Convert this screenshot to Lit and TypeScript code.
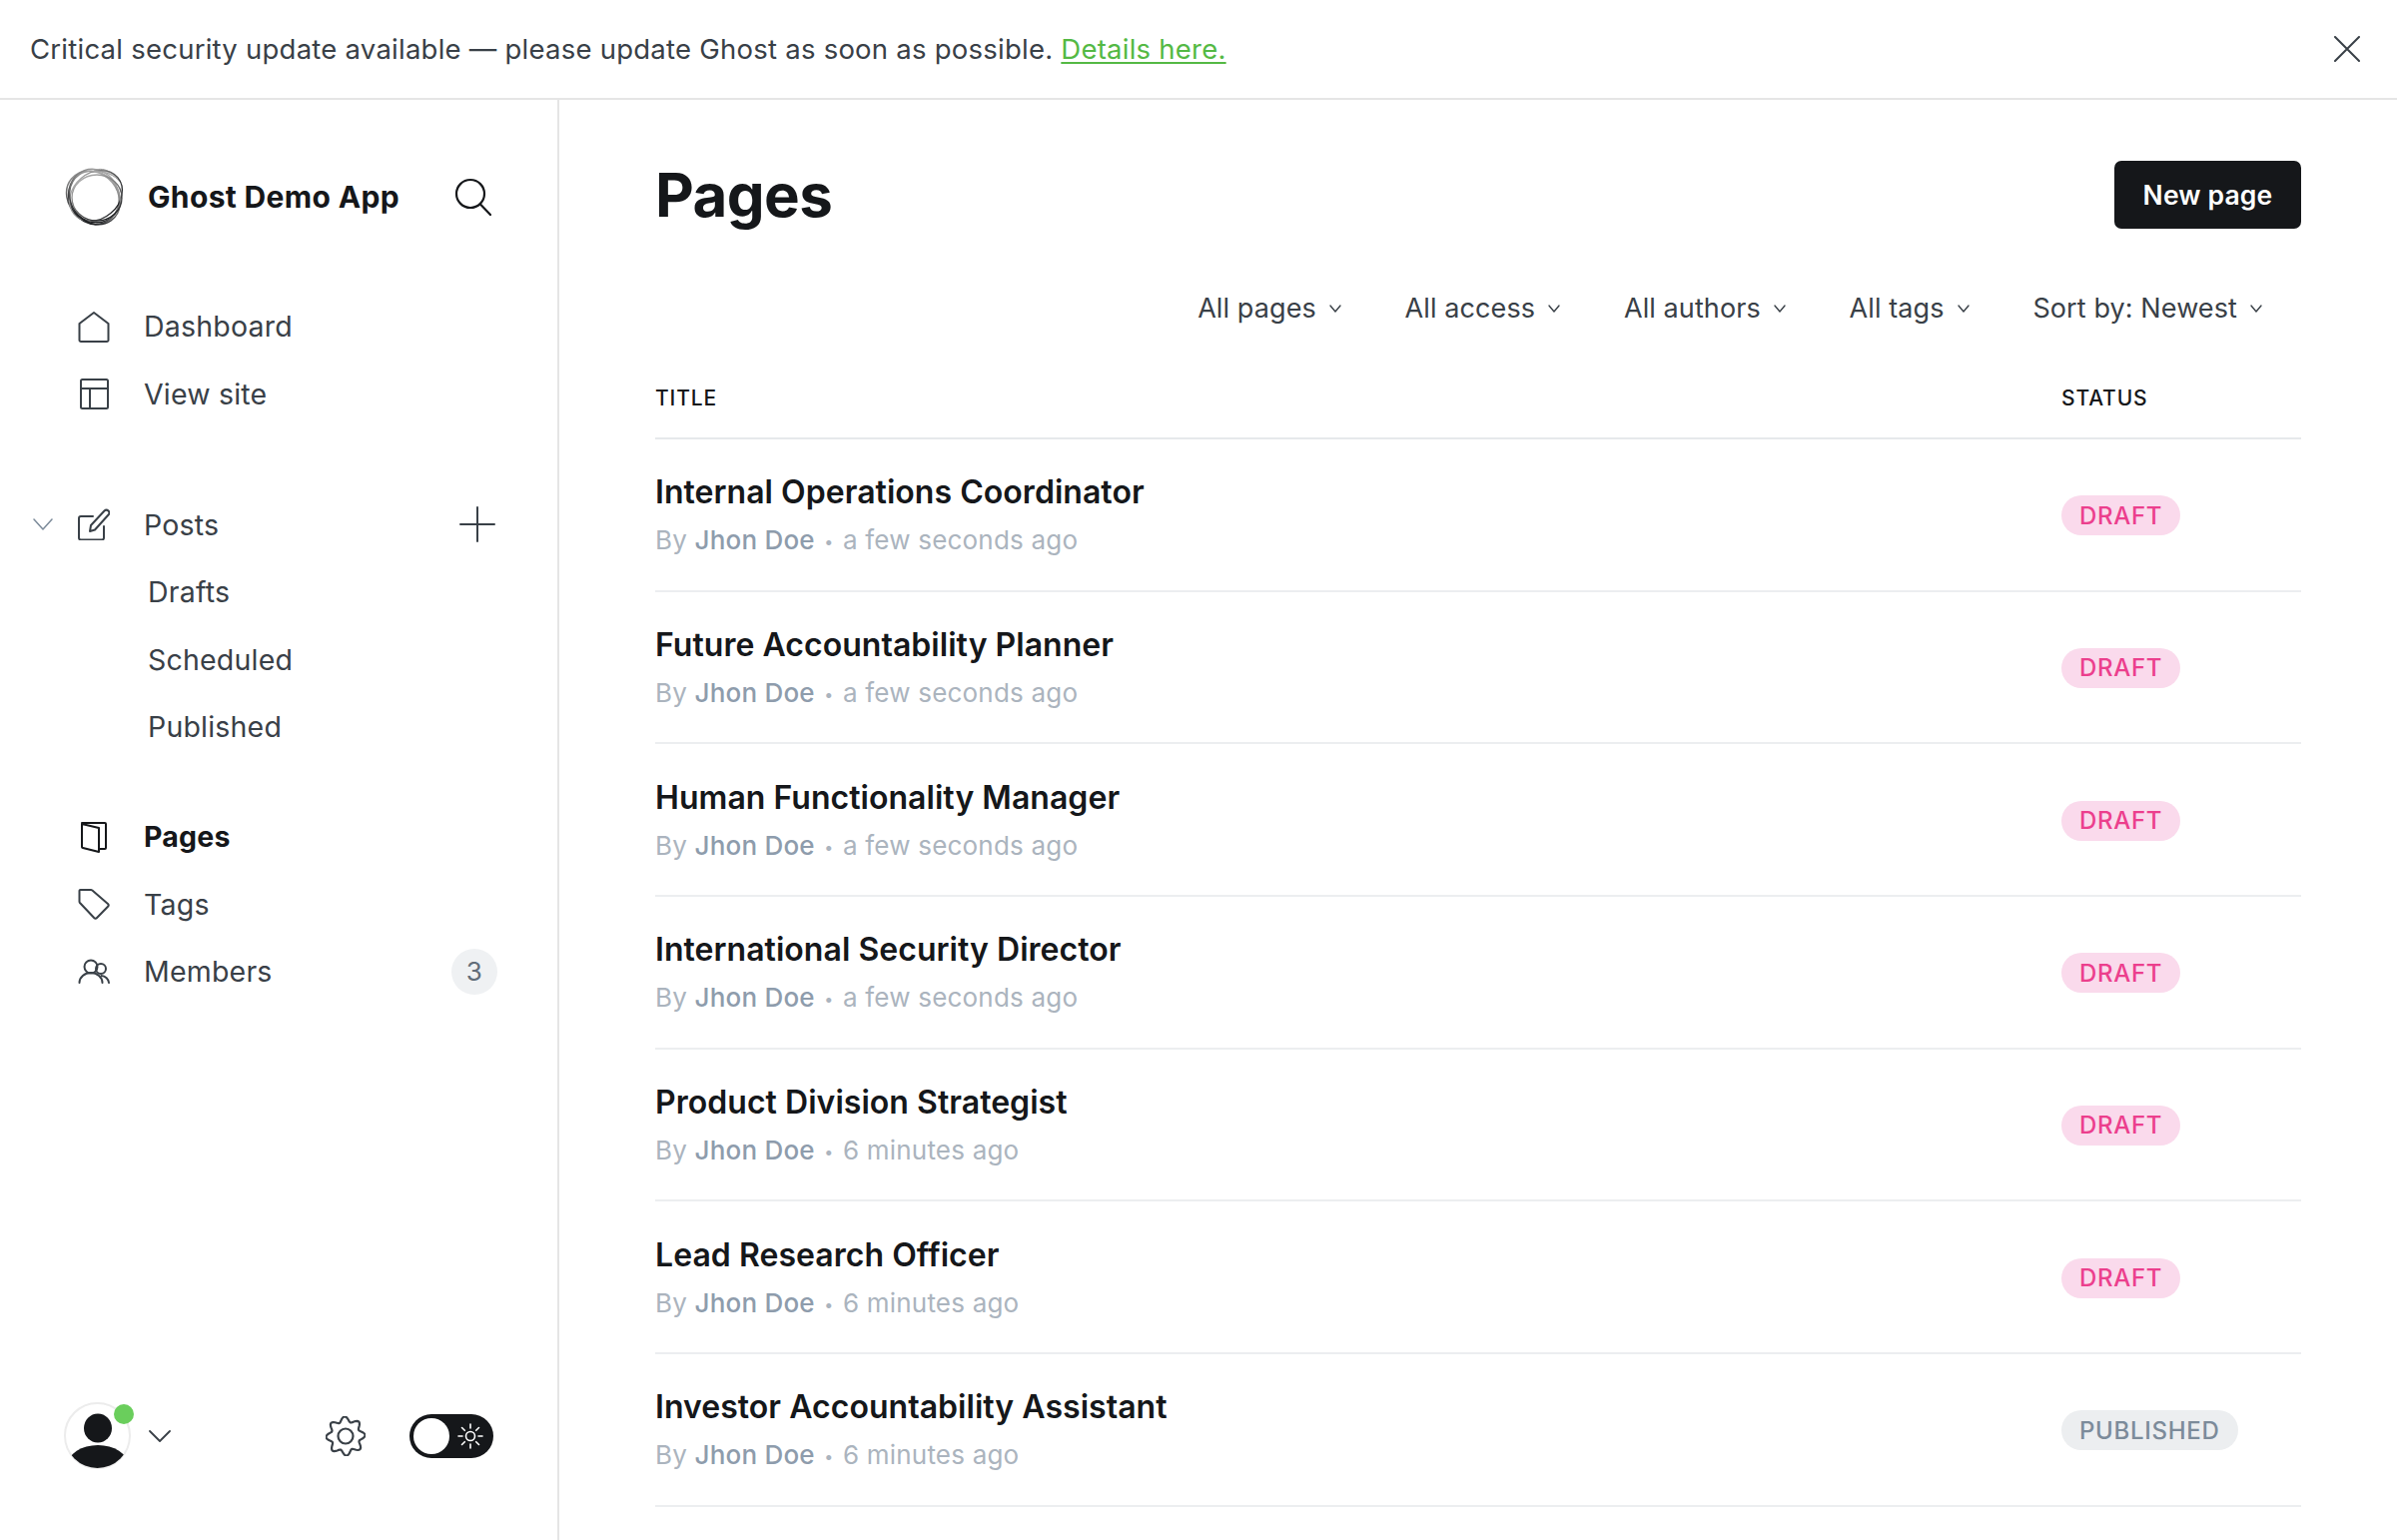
import { LitElement, css, html, svg } from "lit";
import { customElement } from "lit/decorators.js";

const PAGES = [
  { title: "Internal Operations Coordinator", ago: "a few seconds ago", status: "DRAFT" },
  { title: "Future Accountability Planner", ago: "a few seconds ago", status: "DRAFT" },
  { title: "Human Functionality Manager", ago: "a few seconds ago", status: "DRAFT" },
  { title: "International Security Director", ago: "a few seconds ago", status: "DRAFT" },
  { title: "Product Division Strategist", ago: "6 minutes ago", status: "DRAFT" },
  { title: "Lead Research Officer", ago: "6 minutes ago", status: "DRAFT" },
  { title: "Investor Accountability Assistant", ago: "6 minutes ago", status: "PUBLISHED" },
];

const FILTERS = ["All pages", "All access", "All authors", "All tags", "Sort by: Newest"];

// wavy outline for the settings cog
function gearPath() {
  const pts: string[] = [];
  for (let i = 0; i < 96; i++) {
    const a = (i / 96) * Math.PI * 2;
    const r = 17 + 2.6 * Math.cos(8 * a + Math.PI / 8);
    pts.push(`${(20 + r * Math.cos(a)).toFixed(2)} ${(20 + r * Math.sin(a)).toFixed(2)}`);
  }
  return "M" + pts.join("L") + "Z";
}

const ICONS = {
  home: svg`<path d="M16 2 L30.5 13 V29.5 a1.5 1.5 0 0 1 -1.5 1.5 H3 a1.5 1.5 0 0 1 -1.5 -1.5 V13 Z"/>`,
  site: svg`<rect x="3" y="2" width="27" height="29" rx="1.5"/><path d="M3 11 H30 M12 11 V31"/>`,
  edit: svg`<path d="M15 8 H3 a2 2 0 0 0 -2 2 V29.5 a2 2 0 0 0 2 2 H24 a2 2 0 0 0 2 -2 V18"/><path d="M12 23 l1 -6 L26.5 2.5 a2.8 2.8 0 0 1 4 4 L17 21.5 Z"/>`,
  pages: svg`<path d="M4 3 L21 7 V31 L5 27 a1.2 1.2 0 0 1 -1 -1 Z"/><path d="M4 2 H27 a1 1 0 0 1 1 1 V27 a1 1 0 0 1 -1 1 H21"/>`,
  tag: svg`<path d="M2.5 2 H13 a2 2 0 0 1 1.4 .6 L30 16 a2 2 0 0 1 0 2.8 L19 30 a2 2 0 0 1 -2.8 0 L2 15 A2 2 0 0 1 1.5 13.6 V3 a1 1 0 0 1 1 -1 Z"/>`,
  members: svg`<circle cx="13" cy="11" r="6.5"/><path d="M1.5 27 a11.5 10 0 0 1 23 0"/><circle cx="23" cy="13" r="5"/><path d="M23.5 20 a8 7.5 0 0 1 7.5 7"/>`,
};

@customElement("app-root")
export class AppRoot extends LitElement {
  static styles = css`
    :host {
      display: block;
      height: 1542px;
      overflow: hidden;
      background: #fff;
      color: #15171a;
      font-family: Inter, "Liberation Sans", sans-serif;
    }
    svg {
      display: block;
      flex: none;
      fill: none;
      stroke: currentColor;
      stroke-linecap: round;
      stroke-linejoin: round;
    }
    .banner {
      height: 100px;
      box-sizing: border-box;
      border-bottom: 2px solid #e5e5e5;
      display: flex;
      align-items: center;
      justify-content: space-between;
      padding: 0 37px 0 30px;
      font-size: 27.5px;
      letter-spacing: 0.24px;
      color: #394047;
    }
    .banner a {
      color: #54b944;
      text-decoration: underline;
      text-underline-offset: 3px;
    }
    .layout {
      display: flex;
      height: 1442px;
    }
    .sidebar {
      width: 560px;
      box-sizing: border-box;
      border-right: 2px solid #e5e5e5;
      display: flex;
      flex-direction: column;
      padding-top: 67px;
    }
    .brand {
      display: flex;
      align-items: center;
      height: 60px;
      padding: 0 66px 0 65px;
    }
    .brand-name {
      margin-left: 23px;
      font-size: 30px;
      font-weight: 700;
      letter-spacing: 0.35px;
      flex: 1;
    }
    .search {
      color: #15171a;
    }
    .nav {
      margin-top: 66px;
    }
    .group + .group {
      margin-top: 63.5px;
    }
    .group.pages-group {
      margin-top: 42.5px;
    }
    .item {
      display: grid;
      grid-template-columns: 45px 32px 1fr auto;
      align-items: center;
      height: 67.5px;
      padding: 0 60px 0 33px;
      font-size: 28.5px;
      letter-spacing: 0.2px;
      color: #394047;
    }
    .item .label {
      padding-left: 34px;
    }
    .item.active {
      color: #15171a;
      font-weight: 700;
    }
    .plus {
      margin-right: 2px;
    }
    .sub {
      height: 67.5px;
      display: flex;
      align-items: center;
      padding-left: 148px;
      font-size: 28.5px;
      letter-spacing: 0.2px;
      color: #394047;
    }
    .muted {
      color: #7c8b9a;
    }
    .count {
      width: 46px;
      height: 46px;
      border-radius: 50%;
      background: #eff1f3;
      color: #626d79;
      font-size: 26px;
      display: flex;
      align-items: center;
      justify-content: center;
    }
    .footer {
      margin-top: auto;
      display: flex;
      align-items: center;
      padding: 0 64px 71px 64px;
      color: #394047;
    }
    .avatar {
      position: relative;
      width: 67px;
      height: 67px;
    }
    .dot {
      position: absolute;
      left: 50px;
      top: 2px;
      width: 20px;
      height: 20px;
      border-radius: 50%;
      background: #6ace5c;
    }
    .caret {
      margin-left: 18px;
    }
    .gear {
      margin-left: auto;
    }
    .toggle {
      margin-left: 44px;
      width: 84px;
      height: 44px;
      box-sizing: border-box;
      border-radius: 22px;
      background: #15171a;
      display: flex;
      align-items: center;
      padding-left: 4px;
      color: #fff;
    }
    .knob {
      width: 36px;
      height: 36px;
      border-radius: 50%;
      background: #fff;
      margin-right: 8px;
    }
    .main {
      flex: 1;
      padding: 61px 96px 0;
      min-width: 0;
    }
    .head {
      display: flex;
      align-items: center;
      justify-content: space-between;
      height: 68px;
    }
    h1 {
      margin: 0;
      font-size: 60px;
      font-weight: 700;
      letter-spacing: -0.6px;
      line-height: 66px;
    }
    .new {
      width: 187px;
      height: 68px;
      border-radius: 7px;
      background: #15171a;
      color: #fff;
      display: flex;
      align-items: center;
      justify-content: center;
      font-size: 26.5px;
      font-weight: 600;
      letter-spacing: 0.15px;
    }
    .filters {
      display: flex;
      justify-content: flex-end;
      gap: 63.75px;
      height: 40px;
      align-items: center;
      margin-top: 59.5px;
      padding-right: 39px;
      font-size: 27px;
      letter-spacing: 0.1px;
      color: #394047;
    }
    .filter {
      display: flex;
      align-items: center;
      gap: 13px;
    }
    .thead {
      display: grid;
      grid-template-columns: 1fr 240px;
      margin-top: 50.5px;
      padding-bottom: 19px;
      border-bottom: 2px solid #e6e9eb;
      line-height: 40px;
      font-size: 21px;
      font-weight: 500;
      letter-spacing: 0.85px;
    }
    .row {
      display: grid;
      grid-template-columns: 1fr 240px;
      align-items: center;
      height: 152.67px;
      box-sizing: border-box;
      border-bottom: 2px solid #eceef0;
    }
    .text {
      padding-top: 5px;
    }
    .status {
      padding-top: 2px;
    }
    .title {
      font-size: 32px;
      font-weight: 600;
      line-height: 40px;
      letter-spacing: 0.04px;
    }
    .meta {
      margin-top: 8px;
      font-size: 26px;
      line-height: 40px;
      letter-spacing: 0.2px;
      color: #abb4be;
    }
    .author {
      color: #8e9cac;
      font-weight: 500;
    }
    .sep {
      margin: 0 9.5px;
      font-size: 16px;
      vertical-align: 2px;
    }
    .badge {
      display: inline-flex;
      align-items: center;
      height: 40px;
      padding: 0 18px;
      border-radius: 20px;
      font-size: 24px;
      font-weight: 500;
      letter-spacing: 0.7px;
    }
    .badge.draft {
      background: #fadaec;
      color: #ec3f8d;
    }
    .badge.published {
      background: #eceef0;
      color: #7c8b9a;
    }
  `;

  private icon(name: keyof typeof ICONS, size = 32) {
    return html`<svg width=${size} height=${size} viewBox="0 0 32 32" stroke-width="2">${ICONS[name]}</svg>`;
  }

  private logo() {
    return html`<svg width="60" height="60" viewBox="0 0 60 60" stroke-width="1.3">
      <defs>
        <linearGradient id="ring" x1="0.15" y1="0" x2="0.75" y2="1">
          <stop offset="0" stop-color="#b5b5b5" />
          <stop offset="0.55" stop-color="#6a6a6a" />
          <stop offset="1" stop-color="#15171a" />
        </linearGradient>
      </defs>
      <path d="M28 5 C34 -1 48 3 56 16 C50 8 40 4 28 5 Z" fill="#c4c4c4" stroke="#999" stroke-width="1" />
      <ellipse cx="28" cy="30" rx="28" ry="24" transform="rotate(40 28 30)" stroke="url(#ring)" stroke-width="1.5" />
      <ellipse cx="29" cy="30" rx="28" ry="25" transform="rotate(70 29 30)" stroke="url(#ring)" stroke-width="1.5" />
      <ellipse cx="31" cy="29" rx="28.5" ry="23" transform="rotate(-40 31 29)" stroke="url(#ring)" />
      <ellipse cx="30" cy="31" rx="28" ry="24" transform="rotate(55 30 31)" stroke="url(#ring)" stroke-width="1.5" />
      <ellipse cx="32" cy="31" rx="25" ry="23" stroke="url(#ring)" stroke-width="1.3" />
    </svg>`;
  }

  private avatar() {
    return html`<div class="avatar">
      <svg width="67" height="67" viewBox="0 0 67 67">
        <defs><clipPath id="avatar-clip"><circle cx="33.5" cy="33.5" r="32.5" /></clipPath></defs>
        <circle cx="33.5" cy="33.5" r="32.5" stroke="#ececec" stroke-width="2" />
        <g clip-path="url(#avatar-clip)" fill="#15171a" stroke="none">
          <ellipse cx="34" cy="26" rx="14" ry="14.5" />
          <ellipse cx="34" cy="63" rx="30" ry="20" />
        </g>
      </svg>
      <span class="dot"></span>
    </div>`;
  }

  private sun() {
    return html`<svg width="26" height="26" viewBox="0 0 26 26" stroke-width="1.6">
      <circle cx="13" cy="13" r="4.5" />
      <path d="M13 1 V5 M13 21 V25 M1 13 H5 M21 13 H25 M4.5 4.5 L7.3 7.3 M18.7 18.7 L21.5 21.5 M21.5 4.5 L18.7 7.3 M7.3 18.7 L4.5 21.5" />
    </svg>`;
  }

  render() {
    return html`
      <div class="banner">
        <span>Critical security update available — please update Ghost as soon as possible. <a>Details here.</a></span>
        <svg width="26" height="26" viewBox="0 0 26 26" stroke-width="2"><path d="M1 1 L25 25 M25 1 L1 25" /></svg>
      </div>
      <div class="layout">
        <aside class="sidebar">
          <div class="brand">
            ${this.logo()}
            <span class="brand-name">Ghost Demo App</span>
            <svg class="search" width="38" height="38" viewBox="0 0 38 38" stroke-width="2.2">
              <circle cx="17" cy="16" r="14" /><path d="M27 26.5 L37 37" />
            </svg>
          </div>
          <nav class="nav">
            <div class="group">
              <div class="item"><span></span>${this.icon("home")}<span class="label">Dashboard</span></div>
              <div class="item"><span></span>${this.icon("site")}<span class="label">View site</span></div>
            </div>
            <div class="group">
              <div class="item">
                <svg class="muted" width="20" height="12" viewBox="0 0 20 12" stroke-width="1.5"><path d="M1 1 L10 11 L19 1" /></svg>
                ${this.icon("edit")}
                <span class="label">Posts</span>
                <svg class="plus" width="36" height="36" viewBox="0 0 36 36" stroke-width="2"><path d="M18 1 V35 M1 18 H35" /></svg>
              </div>
              <div class="sub">Drafts</div>
              <div class="sub">Scheduled</div>
              <div class="sub">Published</div>
            </div>
            <div class="group pages-group">
              <div class="item active"><span></span>${this.icon("pages")}<span class="label">Pages</span></div>
              <div class="item"><span></span>${this.icon("tag")}<span class="label">Tags</span></div>
              <div class="item"><span></span>${this.icon("members")}<span class="label">Members</span><span class="count">3</span></div>
            </div>
          </nav>
          <div class="footer">
            ${this.avatar()}
            <svg class="caret" width="22" height="12" viewBox="0 0 22 12" stroke-width="1.8"><path d="M1 1 L11 11 L21 1" /></svg>
            <svg class="gear" width="40" height="40" viewBox="0 0 40 40" stroke-width="2.2">
              <path d=${gearPath()} /><circle cx="20" cy="20" r="7.5" />
            </svg>
            <div class="toggle"><span class="knob"></span>${this.sun()}</div>
          </div>
        </aside>
        <main class="main">
          <div class="head">
            <h1>Pages</h1>
            <div class="new">New page</div>
          </div>
          <div class="filters">
            ${FILTERS.map(
              (f) => html`<div class="filter">
                <span>${f}</span>
                <svg width="12" height="8" viewBox="0 0 12 8" stroke-width="1.4"><path d="M1 1 L6 7 L11 1" /></svg>
              </div>`
            )}
          </div>
          <div class="thead"><span>TITLE</span><span>STATUS</span></div>
          ${PAGES.map(
            (p) => html`<div class="row">
              <div class="text">
                <div class="title">${p.title}</div>
                <div class="meta">By <span class="author">Jhon Doe</span><span class="sep">•</span>${p.ago}</div>
              </div>
              <div class="status">
                <span class="badge ${p.status === "DRAFT" ? "draft" : "published"}">${p.status}</span>
              </div>
            </div>`
          )}
        </main>
      </div>
    `;
  }
}
